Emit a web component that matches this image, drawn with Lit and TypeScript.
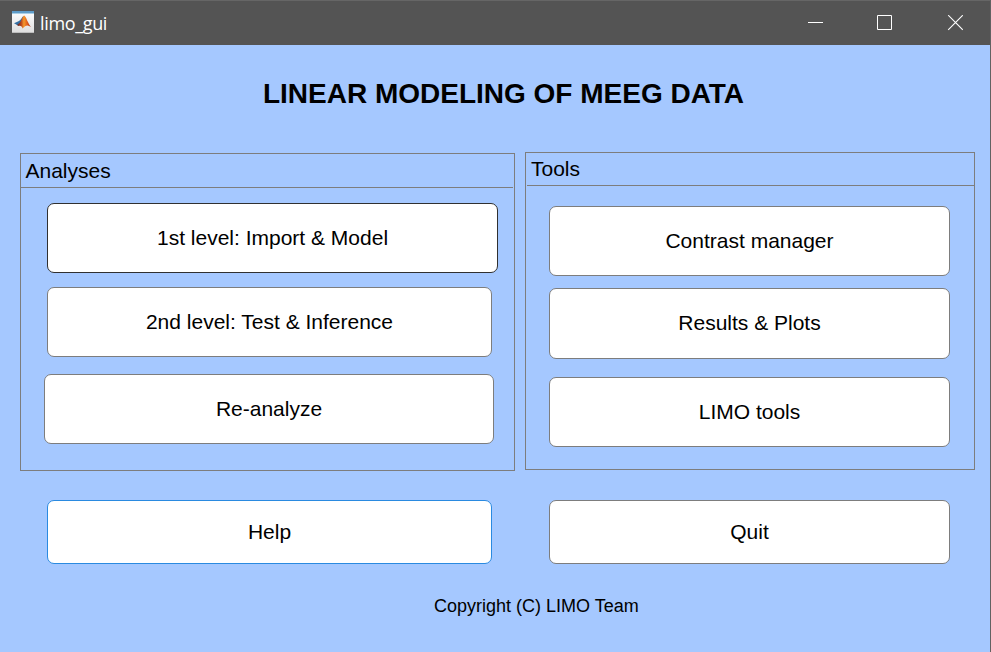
import { LitElement, html, css } from "lit";
import { customElement, property } from "lit/decorators.js";

@customElement("limo-button")
class LimoButton extends LitElement {
  @property() label = "";

  static styles = css`
    :host {
      display: block;
      box-sizing: border-box;
    }
    .button {
      display: flex;
      align-items: center;
      justify-content: center;
      width: 100%;
      height: 100%;
      box-sizing: border-box;
      margin: 0;
      padding: 0 0 1px;
      border: 1px solid var(--edge, #7d7d7d);
      border-radius: 7px;
      background: #fff;
      color: #000;
      font: 21px/24px "Liberation Sans", Arial, sans-serif;
      white-space: nowrap;
    }
  `;

  render() {
    return html`<button class="button" type="button">${this.label}</button>`;
  }
}

@customElement("limo-panel")
class LimoPanel extends LitElement {
  @property() heading = "";

  static styles = css`
    :host {
      display: flex;
      flex-direction: column;
      box-sizing: border-box;
      height: 318px;
      border: 1px solid #7d7d7d;
    }
    .heading {
      flex: none;
      box-sizing: border-box;
      height: var(--heading-height, 34px);
      margin: var(--heading-margin, 0);
      padding: var(--heading-padding, 0);
      border-bottom: 1px solid #7d7d7d;
      font: 21px/24px "Liberation Sans", Arial, sans-serif;
      color: #000;
    }
    .body {
      display: flex;
      flex-direction: column;
    }
  `;

  render() {
    return html`
      <div class="heading">${this.heading}</div>
      <div class="body"><slot></slot></div>
    `;
  }
}

@customElement("app-root")
class AppRoot extends LitElement {
  static styles = css`
    :host {
      display: flex;
      flex-direction: column;
      box-sizing: border-box;
      width: 991px;
      height: 652px;
      overflow: hidden;
      background: #a5c8ff;
      border-right: 1px solid #626262;
      color: #000;
      font-family: "Liberation Sans", Arial, sans-serif;
    }
    .titlebar {
      flex: none;
      display: flex;
      align-items: center;
      box-sizing: border-box;
      height: 45px;
      padding-left: 12px;
      border-top: 1px solid #666;
      background: #545454;
      color: #fff;
    }
    .logo {
      flex: none;
      width: 22px;
      height: 22px;
      margin-bottom: 2px;
    }
    .name {
      flex: 1;
      padding: 0 0 0 6px;
      font: 18px/24px "Open Sans", "Noto Sans", sans-serif;
      letter-spacing: -0.35px;
    }
    .controls {
      display: flex;
      width: 210px;
    }
    .control {
      flex: 1;
      display: flex;
      justify-content: center;
    }
    .control svg {
      width: 16px;
      height: 16px;
    }
    .title {
      flex: none;
      margin: 32px 0 0 12px;
      padding-left: 5px;
      font-size: 28px;
      line-height: 34px;
      font-weight: 700;
      text-align: center;
      white-space: nowrap;
    }
    .panels {
      flex: none;
      display: flex;
      align-items: flex-start;
      gap: 10px;
      margin: 41px 0 0 20px;
    }
    .analyses {
      width: 495px;
      margin-top: 1px;
      --heading-margin: 0 1px 0 0;
      --heading-padding: 5px 0 0 4.5px;
    }
    .tools {
      width: 450px;
      --heading-height: 33px;
      --heading-margin: 0 0 0 1px;
      --heading-padding: 4px 0 0 4px;
    }
    .first { width: 451px; height: 70px; margin: 15px 0 0 26px; --edge: #303030; }
    .second { width: 445px; height: 70px; margin: 14px 0 0 26px; }
    .again { width: 450px; height: 70px; margin: 17px 0 0 23px; }
    .contrast { width: 401px; height: 70px; margin: 20px 0 0 23px; }
    .results { width: 401px; height: 71px; margin: 12px 0 0 23px; }
    .utilities { width: 401px; height: 70px; margin: 18px 0 0 23px; }
    .actions {
      flex: none;
      display: flex;
      gap: 57px;
      margin: 29px 0 0 47px;
    }
    .help { width: 445px; height: 64px; --edge: #2a8ae0; }
    .quit { width: 401px; height: 64px; }
    .copyright {
      margin: 31px 0 0 434px;
      font-size: 18px;
      line-height: 22px;
      white-space: nowrap;
    }
  `;

  render() {
    return html`
      <header class="titlebar">
        <svg class="logo" viewBox="0 0 22 22">
          <defs>
            <linearGradient id="paper" x2="0" y2="1">
              <stop offset="0" stop-color="#fff" />
              <stop offset="1" stop-color="#dedede" />
            </linearGradient>
            <linearGradient id="flame" x2="1">
              <stop offset="0" stop-color="#5e2420" />
              <stop offset=".3" stop-color="#b8431c" />
              <stop offset=".5" stop-color="#f59a2c" />
              <stop offset=".7" stop-color="#e5641c" />
              <stop offset="1" stop-color="#a62a16" />
            </linearGradient>
          </defs>
          <rect width="22" height="22" fill="url(#paper)" />
          <rect width="22" height="2" fill="#5f9cc8" />
          <path d="M0 2.5H22" stroke="#a9cfe5" />
          <path d="M0 21.5H22" stroke="#bdbdbd" />
          <path d="M2 12.3L6.5 10.2C8.8 9.6 9.6 6.4 11.5 5L9.7 12L6.8 14.8L5 13.9Z" fill="#346fa2" />
          <path d="M5 14L7.6 12C9.6 10 10.1 5.6 12.2 4.6C14.4 6 15.5 11.8 18.9 16C16 13.7 13.6 14 10.6 17.5C10 15.4 8.8 14.3 6.6 14.9Z" fill="url(#flame)" />
        </svg>
        <div class="name">limo_gui</div>
        <div class="controls">
          <div class="control">
            <svg viewBox="0 0 16 16"><path d="M1 7.5H16" stroke="#fff" /></svg>
          </div>
          <div class="control">
            <svg viewBox="0 0 16 16"><path d="M.5 .5H14.5V14.5H.5Z" fill="none" stroke="#fff" /></svg>
          </div>
          <div class="control">
            <svg viewBox="0 0 16 16"><path d="M1.2 .2L15.8 14.8M15.8 .2L1.2 14.8" stroke="#fff" stroke-width="1.1" /></svg>
          </div>
        </div>
      </header>
      <div class="title">LINEAR MODELING OF MEEG DATA</div>
      <main class="panels">
        <limo-panel class="analyses" heading="Analyses">
          <limo-button class="first" label="1st level: Import &amp; Model"></limo-button>
          <limo-button class="second" label="2nd level: Test &amp; Inference"></limo-button>
          <limo-button class="again" label="Re-analyze"></limo-button>
        </limo-panel>
        <limo-panel class="tools" heading="Tools">
          <limo-button class="contrast" label="Contrast manager"></limo-button>
          <limo-button class="results" label="Results &amp; Plots"></limo-button>
          <limo-button class="utilities" label="LIMO tools"></limo-button>
        </limo-panel>
      </main>
      <div class="actions">
        <limo-button class="help" label="Help"></limo-button>
        <limo-button class="quit" label="Quit"></limo-button>
      </div>
      <div class="copyright">Copyright (C) LIMO Team</div>
    `;
  }
}
